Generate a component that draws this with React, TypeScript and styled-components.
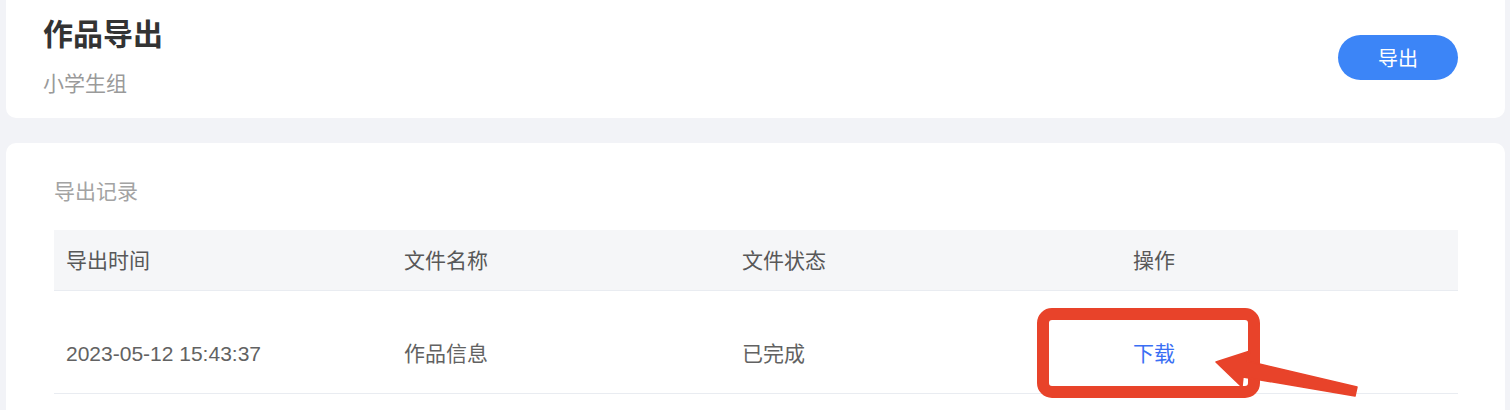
import React from "react";
import styled, { createGlobalStyle } from "styled-components";

const GlobalStyle = createGlobalStyle`
  html, body {
    margin: 0;
    padding: 0;
    background: #f2f3f7;
    font-family: "Liberation Sans", "Noto Sans CJK SC", sans-serif;
  }
  * { box-sizing: border-box; }
`;

const Page = styled.div`
  position: relative;
  width: 1510px;
  height: 410px;
  overflow: hidden;
  padding: 0 5px 0 6px;
  display: flex;
  flex-direction: column;
  gap: 25px;
`;

const HeaderCard = styled.section`
  background: #ffffff;
  border-radius: 0 0 10px 10px;
  height: 118px;
  padding: 20px 47px 24px 37px;
  display: flex;
  align-items: center;
  justify-content: space-between;
`;

const TitleBlock = styled.div`
  display: flex;
  flex-direction: column;
  gap: 23px;
`;

const Title = styled.h1`
  margin: 0;
  font-size: 30px;
  line-height: 30px;
  font-weight: 700;
  color: #333333;
`;

const Subtitle = styled.div`
  font-size: 21px;
  line-height: 21px;
  color: #9a9a9a;
`;

const PrimaryButton = styled.button`
  width: 120px;
  height: 45px;
  border: none;
  border-radius: 23px;
  background: #3c85f7;
  color: #ffffff;
  font-family: inherit;
  font-size: 20px;
  cursor: pointer;
  padding: 0;
`;

const RecordCard = styled.section`
  background: #ffffff;
  border-radius: 10px 10px 0 0;
  flex: 1;
  padding: 38px 47px 0 48px;
  display: flex;
  flex-direction: column;
  gap: 28px;
`;

const SectionLabel = styled.div`
  font-size: 21px;
  line-height: 21px;
  color: #a3a3a3;
`;

const Table = styled.div`
  display: flex;
  flex-direction: column;
`;

const Row = styled.div<{ $head?: boolean }>`
  display: grid;
  grid-template-columns: 338px 338px 338px 1fr;
  align-items: ${(p) => (p.$head ? "center" : "start")};
  height: ${(p) => (p.$head ? "61px" : "103px")};
  padding-top: ${(p) => (p.$head ? "0" : "52px")};
  background: ${(p) => (p.$head ? "#f5f6f8" : "#ffffff")};
  border-bottom: 1px solid #e9ecf1;
`;

const Cell = styled.div<{ $head?: boolean; $action?: boolean; $link?: boolean }>`
  padding-left: ${(p) => (p.$action ? "65px" : "12px")};
  font-size: 21px;
  line-height: 21px;
  color: ${(p) => (p.$link ? "#3a6ff4" : p.$head ? "#585858" : "#626262")};
  white-space: nowrap;
  cursor: ${(p) => (p.$link ? "pointer" : "default")};
`;

const Annotation = styled.svg`
  position: absolute;
  left: 0;
  top: 0;
  pointer-events: none;
`;

export default function App() {
  return (
    <>
      <GlobalStyle />
      <Page>
        <HeaderCard>
          <TitleBlock>
            <Title>作品导出</Title>
            <Subtitle>小学生组</Subtitle>
          </TitleBlock>
          <PrimaryButton>导出</PrimaryButton>
        </HeaderCard>
        <RecordCard>
          <SectionLabel>导出记录</SectionLabel>
          <Table>
            <Row $head>
              <Cell $head>导出时间</Cell>
              <Cell $head>文件名称</Cell>
              <Cell $head>文件状态</Cell>
              <Cell $head $action>操作</Cell>
            </Row>
            <Row>
              <Cell>2023-05-12 15:43:37</Cell>
              <Cell>作品信息</Cell>
              <Cell>已完成</Cell>
              <Cell $action $link>下载</Cell>
            </Row>
          </Table>
        </RecordCard>
        <Annotation width="1510" height="410" viewBox="0 0 1510 410">
          <rect
            x="1043"
            y="314"
            width="211"
            height="78"
            rx="9"
            fill="none"
            stroke="#e8432a"
            strokeWidth="12"
          />
          <polygon
            points="1216,362 1250,351 1247,361 1357,387 1355,396 1243,377 1242,387"
            fill="#e8432a"
            stroke="#e8432a"
            strokeWidth="1.5"
            strokeLinejoin="round"
          />
        </Annotation>
      </Page>
    </>
  );
}
